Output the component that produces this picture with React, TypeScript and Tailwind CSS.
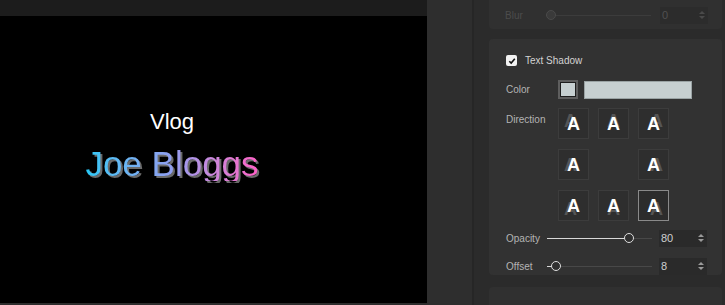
import React from 'react'

const font = { fontFamily: '"Liberation Sans", Arial, sans-serif' }

// shadow offsets for each direction cell, null = empty centre
const directions: (string | null)[] = [
  '[text-shadow:-3px_-3px_0_#555]',
  '[text-shadow:0_-3px_0_#555]',
  '[text-shadow:3px_-3px_0_#555]',
  '[text-shadow:-3px_0_0_#555]',
  null,
  '[text-shadow:3px_0_0_#555]',
  '[text-shadow:-3px_3px_0_#555]',
  '[text-shadow:0_3px_0_#555]',
  '[text-shadow:3px_3px_0_#555]',
]

const Spinner: React.FC<{ faded?: boolean }> = ({ faded }) => (
  <div className={`flex flex-col items-center gap-[2px] ${faded ? 'text-[#4a4a4a]' : 'text-[#9a9a9a]'}`}>
    <div className="w-0 h-0 border-l-[3px] border-r-[3px] border-b-[3px] border-l-transparent border-r-transparent border-b-current" />
    <div className="w-0 h-0 border-l-[3px] border-r-[3px] border-t-[3px] border-l-transparent border-r-transparent border-t-current" />
  </div>
)

const NumberBox: React.FC<{ value: string; faded?: boolean }> = ({ value, faded }) => (
  <div className={`flex items-center justify-between w-[48px] h-[17px] pl-[2px] pr-[3px] ${faded ? 'bg-[#2c2c2c] text-[#505050]' : 'bg-[#2a2a2a] text-[#cfcfcf]'} text-[11px]`}>
    <span>{value}</span>
    <Spinner faded={faded} />
  </div>
)

const Slider: React.FC<{ pos: number; faded?: boolean }> = ({ pos, faded }) => (
  <div className="relative w-[105px] h-[12px] flex items-center">
    <div className={`w-full h-px ${faded ? 'bg-[#3c3c3c]' : 'bg-[#484848]'}`} />
    {!faded && (
      <div className="absolute left-0 h-px bg-[#d8d8d8]" style={{ width: pos }} />
    )}
    <div
      className={`absolute top-[1px] w-[10px] h-[10px] rounded-full border-[1.5px] ${faded ? 'border-[#4a4a4a] bg-[#3a3a3a]' : 'border-[#dedede] bg-[#2f2f2f]'}`}
      style={{ left: pos - 5 }}
    />
  </div>
)

const Row: React.FC<{ label: string; pos: number; value: string; faded?: boolean }> = ({ label, pos, value, faded }) => (
  <div className="flex items-center h-[18px]">
    <span className={`w-[41px] text-[10px] ${faded ? 'text-[#4c4c4c]' : 'text-[#b4b4b4]'}`}>{label}</span>
    <Slider pos={pos} faded={faded} />
    <div className={faded ? 'ml-[9px]' : 'ml-[7px]'}>
      <NumberBox value={value} faded={faded} />
    </div>
  </div>
)

export default function App() {
  return (
    <div className="flex w-[725px] h-[305px] overflow-hidden bg-[#2b2b2b]" style={font}>
      {/* preview */}
      <div className="flex flex-col w-[427px] shrink-0">
        <div className="h-[16px] bg-[#1c1c1c]" />
        <div className="flex-1 bg-black flex flex-col items-center pr-[83px] pt-[95px]">
          <div className="text-white text-[22px] leading-none">Vlog</div>
          <div className="mt-[13px] text-[35px] leading-none bg-gradient-to-r from-[#1fc8f6] via-[#8f9ef0] to-[#ff5ec6] bg-clip-text text-transparent [filter:drop-shadow(2px_2px_0_#6a6a6a)]">
            Joe Bloggs
          </div>
        </div>
        <div className="h-[2px] bg-[#2d2d2d]" />
      </div>

      {/* side strip */}
      <div className="w-[47px] shrink-0 bg-[#2e2e2e] border-r-2 border-[#262626]" />

      {/* properties */}
      <div className="flex-1 flex flex-col pl-[15px] pr-[3px]">
        {/* blur panel (cut off) */}
        <div className="h-[32px] bg-[#303030] rounded-b-sm pl-[16px] flex items-start pt-[6px]">
          <Row label="Blur" pos={5} value="0" faded />
        </div>

        {/* text shadow panel */}
        <div className="mt-[10px] h-[241px] bg-[#323232] rounded-sm pl-[17px] pt-[16px]">
          <div className="flex items-center gap-[8px] h-[11px]">
            <div className="w-[11px] h-[11px] rounded-[2px] bg-[#f2f2f2] flex items-center justify-center">
              <svg width="8" height="8" viewBox="0 0 8 8">
                <path d="M1.3 4.2 L3.2 6.1 L6.8 1.8" fill="none" stroke="#111" strokeWidth="1.6" />
              </svg>
            </div>
            <span className="text-[10px] text-[#d2d2d2]">Text Shadow</span>
          </div>

          <div className="flex items-center mt-[14px] h-[19px]">
            <span className="w-[52px] text-[10px] text-[#b4b4b4]">Color</span>
            <div className="w-[20px] h-[19px] border-2 border-[#5e5e5e] bg-[#1e1e1e] p-px">
              <div className="w-full h-full bg-[#c6cfd0]" />
            </div>
            <div className="ml-[6px] w-[108px] h-[18px] bg-[#c6cfd0] border border-[#9aa3a4]" />
          </div>

          <div className="flex mt-[9px]">
            <span className="w-[52px] text-[10px] text-[#b4b4b4] pt-[4px]">Direction</span>
            <div className="grid grid-cols-[31px_31px_31px] gap-x-[9px] gap-y-[10px]">
              {directions.map((d, i) =>
                d ? (
                  <div
                    key={i}
                    className={`w-[31px] h-[31px] flex items-center justify-center border ${i === 8 ? 'border-[#8a8a8a] bg-[#2c2c2c]' : 'border-[#3c3c3c] bg-[#2e2e2e]'}`}
                  >
                    <span className={`text-[18px] font-bold text-white leading-none ${d}`}>A</span>
                  </div>
                ) : (
                  <div key={i} className="w-[31px] h-[31px]" />
                )
              )}
            </div>
          </div>

          <div className="mt-[8px]">
            <Row label="Opacity" pos={82} value="80" />
          </div>
          <div className="mt-[10px]">
            <Row label="Offset" pos={9} value="8" />
          </div>
        </div>

        {/* next panel */}
        <div className="mt-[12px] h-[20px] bg-[#303030] rounded-t-sm" />
      </div>
    </div>
  )
}
